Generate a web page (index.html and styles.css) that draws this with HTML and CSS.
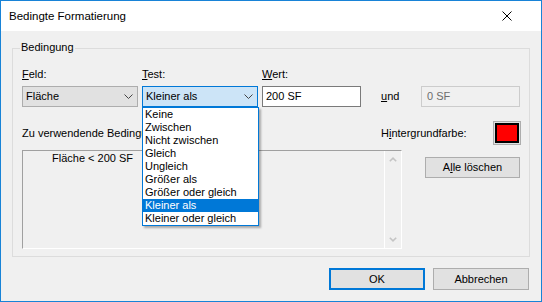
FILE: index.html
```html
<!DOCTYPE html>
<html lang="de">
<head>
<meta charset="utf-8">
<link rel="stylesheet" href="styles.css">
</head>
<body>
<div class="window">
  <div class="titlebar">
    <span class="title">Bedingte Formatierung</span>
    <svg class="close" width="10" height="10" viewBox="0 0 10 10"><path d="M0.5 0.5 L9.5 9.5 M9.5 0.5 L0.5 9.5" stroke="#000" stroke-width="1" fill="none"/></svg>
  </div>
  <div class="content">
    <div class="group">
      <span class="legend">Bedingung</span>
      <div class="grid">
        <span class="lbl"><u>F</u>eld:</span>
        <span class="lbl"><u>T</u>est:</span>
        <span class="lbl"><u>W</u>ert:</span>
        <span></span>
        <span></span>

        <div class="combo">
          <span>Fläche</span>
          <svg class="chev" width="9" height="5" viewBox="0 0 9 5"><path d="M0.5 0.5 L4.5 4.5 L8.5 0.5" stroke="#444" fill="none"/></svg>
        </div>
        <div class="combo focus">
          <span>Kleiner als</span>
          <svg class="chev" width="9" height="5" viewBox="0 0 9 5"><path d="M0.5 0.5 L4.5 4.5 L8.5 0.5" stroke="#444" fill="none"/></svg>
          <ul class="dropdown">
            <li>Keine</li>
            <li>Zwischen</li>
            <li>Nicht zwischen</li>
            <li>Gleich</li>
            <li>Ungleich</li>
            <li>Größer als</li>
            <li>Größer oder gleich</li>
            <li class="sel">Kleiner als</li>
            <li>Kleiner oder gleich</li>
          </ul>
        </div>
        <div class="input">200 SF</div>
        <span class="und"><u>u</u>nd</span>
        <div class="input disabled">0 SF</div>
      </div>

      <div class="row2">
        <span>Zu verwendende Bedingungen:</span>
        <div class="bgcolor">
          <span>H<u>i</u>ntergrundfarbe:</span>
          <div class="swatch"><div class="swatch-in"></div></div>
        </div>
      </div>

      <div class="row3">
        <div class="listbox">
          <div class="items">
            <div class="item">Fläche &lt; 200 SF</div>
          </div>
          <div class="scroll">
            <svg width="8" height="5" viewBox="0 0 8 5"><path d="M0.8 4.3 L4 1.2 L7.2 4.3" stroke="#c4c4c4" stroke-width="1.6" fill="none"/></svg>
            <svg width="8" height="5" viewBox="0 0 8 5"><path d="M0.8 0.7 L4 3.8 L7.2 0.7" stroke="#c4c4c4" stroke-width="1.6" fill="none"/></svg>
          </div>
        </div>
        <div class="btn clear">A<u>l</u>le löschen</div>
      </div>
    </div>
    <div class="buttons">
      <div class="btn ok">OK</div>
      <div class="btn">Abbrechen</div>
    </div>
  </div>
</div>
</body>
</html>
```
FILE: styles.css
```css
html, body {
  margin: 0;
  padding: 0;
  background: #ffffff;
}
body {
  width: 542px;
  height: 302px;
  overflow: hidden;
  font-family: "Liberation Sans", Arial, sans-serif;
  font-size: 11px;
  line-height: 13px;
  color: #000;
}
.window {
  box-sizing: border-box;
  width: 542px;
  height: 302px;
  border: 1px solid #1883d7;
  display: flex;
  flex-direction: column;
}
.titlebar {
  height: 30px;
  background: #fff;
  display: flex;
  align-items: center;
  justify-content: space-between;
  padding: 0 29px 0 8px;
  flex: none;
}
.title {
  font-size: 11.5px;
  line-height: 15px;
  margin-top: 1px;
}
.close {
  display: block;
}
.content {
  flex: 1;
  background: #f0f0f0;
  padding: 17px 12px 0 11px;
}
.group {
  position: relative;
  box-sizing: border-box;
  width: 518px;
  border: 1px solid #dcdcdc;
  padding: 19px 9px 7px 9px;
}
.legend {
  position: absolute;
  top: -8px;
  left: 7px;
  padding: 0 1px;
  background: #f0f0f0;
}
u {
  text-decoration: underline;
  text-underline-offset: 1px;
}
.grid {
  display: grid;
  grid-template-columns: 116px 116px 99px 52px 99px;
  grid-template-rows: 13px 21px;
  column-gap: 4px;
  row-gap: 5px;
}
.combo {
  position: relative;
  box-sizing: border-box;
  height: 21px;
  background: #e1e1e1;
  border: 1px solid #adadad;
  display: flex;
  align-items: center;
  justify-content: space-between;
  padding: 0 4px 0 3px;
}
.combo.focus {
  background: #cce4f7;
  border-color: #0078d7;
}
.chev {
  display: block;
}
.input {
  box-sizing: border-box;
  height: 21px;
  background: #fff;
  border: 1px solid #7a7a7a;
  padding: 3px 3px 0 3px;
}
.input.disabled {
  background: #f0f0f0;
  border-color: #cccccc;
  color: #6d6d6d;
  padding-left: 5px;
}
.und {
  align-self: center;
  padding-left: 16px;
}
.dropdown {
  position: absolute;
  top: 20px;
  left: -1px;
  z-index: 5;
  box-sizing: border-box;
  width: 117px;
  margin: 0;
  padding: 0;
  list-style: none;
  background: #fff;
  border: 1px solid #0078d7;
  box-shadow: 2px 2px 2px rgba(0, 0, 0, 0.3);
}
.dropdown li {
  height: 13px;
  line-height: 13px;
  padding-left: 2px;
}
.dropdown li.sel {
  background: #0078d7;
  color: #fff;
}
.row2 {
  margin-top: 14px;
  height: 24px;
  display: flex;
  align-items: center;
  justify-content: space-between;
}
.bgcolor {
  width: 140px;
  margin-right: -1px;
  display: flex;
  align-items: center;
  justify-content: space-between;
}
.swatch {
  box-sizing: border-box;
  width: 28px;
  height: 24px;
  border: 1px solid #adadad;
  background: #e1e1e1;
  padding: 1px;
}
.swatch-in {
  box-sizing: border-box;
  width: 100%;
  height: 100%;
  border: 2px solid #000;
  background: #ff0000;
}
.row3 {
  margin-top: 5px;
  display: flex;
  align-items: flex-start;
  justify-content: space-between;
}
.listbox {
  box-sizing: border-box;
  width: 380px;
  height: 99px;
  border-top: 1px solid #a0a0a0;
  border-left: 1px solid #a0a0a0;
  border-right: 1px solid #fff;
  border-bottom: 1px solid #fff;
  display: flex;
}
.items {
  flex: 1;
  padding: 1px 0 0 29px;
}
.scroll {
  box-sizing: border-box;
  width: 17px;
  border-left: 1px solid #fff;
  display: flex;
  flex-direction: column;
  justify-content: space-between;
  align-items: center;
  padding: 6px 0 6px 0;
}
.scroll svg {
  display: block;
}
.btn {
  box-sizing: border-box;
  width: 95px;
  height: 21px;
  background: #e1e1e1;
  border: 1px solid #adadad;
  display: flex;
  align-items: center;
  justify-content: center;
}
.clear {
  margin-top: 7px;
}
.buttons {
  margin-top: 11px;
  display: flex;
  justify-content: flex-end;
  gap: 8px;
}
.buttons .btn {
  width: 96px;
  height: 22px;
}
.buttons .btn.ok {
  border: 2px solid #0078d7;
}
```
